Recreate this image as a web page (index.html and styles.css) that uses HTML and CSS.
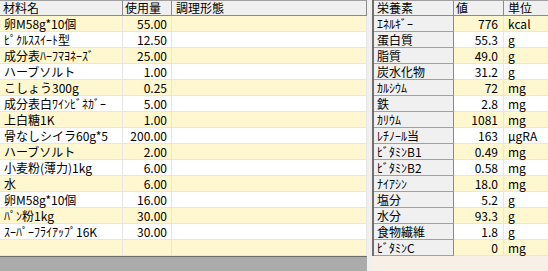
FILE: index.html
```html
<!DOCTYPE html>
<html lang="ja">
<head>
<meta charset="utf-8">
<link rel="stylesheet" href="styles.css">
</head>
<body>
<div class="screen">
  <div class="left">
    <div class="grid">
      <div class="row head">
        <div class="c c1">材料名</div>
        <div class="c c2">使用量</div>
        <div class="c c3">調理形態</div>
      </div>
      <div class="row y"><div class="c c1">卵M58g*10個</div><div class="c c2 num">55.00</div><div class="c c3"></div></div>
      <div class="row"><div class="c c1">ﾋﾟｸﾙｽｽｲｰﾄ型</div><div class="c c2 num">12.50</div><div class="c c3"></div></div>
      <div class="row y"><div class="c c1">成分表ﾊｰﾌﾏﾖﾈｰｽﾞ</div><div class="c c2 num">25.00</div><div class="c c3"></div></div>
      <div class="row"><div class="c c1">ハーブソルト</div><div class="c c2 num">1.00</div><div class="c c3"></div></div>
      <div class="row y"><div class="c c1">こしょう300g</div><div class="c c2 num">0.25</div><div class="c c3"></div></div>
      <div class="row"><div class="c c1">成分表白ﾜｲﾝﾋﾞﾈｶﾞｰ</div><div class="c c2 num">5.00</div><div class="c c3"></div></div>
      <div class="row y"><div class="c c1">上白糖1K</div><div class="c c2 num">1.00</div><div class="c c3"></div></div>
      <div class="row"><div class="c c1">骨なしシイラ60g*5</div><div class="c c2 num">200.00</div><div class="c c3"></div></div>
      <div class="row y"><div class="c c1">ハーブソルト</div><div class="c c2 num">2.00</div><div class="c c3"></div></div>
      <div class="row"><div class="c c1">小麦粉(薄力)1kg</div><div class="c c2 num">6.00</div><div class="c c3"></div></div>
      <div class="row y"><div class="c c1">水</div><div class="c c2 num">6.00</div><div class="c c3"></div></div>
      <div class="row"><div class="c c1">卵M58g*10個</div><div class="c c2 num">16.00</div><div class="c c3"></div></div>
      <div class="row y"><div class="c c1">ﾊﾟﾝ粉1kg</div><div class="c c2 num">30.00</div><div class="c c3"></div></div>
      <div class="row"><div class="c c1">ｽｰﾊﾟｰﾌﾗｲｱｯﾌﾟ16K</div><div class="c c2 num">30.00</div><div class="c c3"></div></div>
      <div class="row y"><div class="c c1"></div><div class="c c2 num"></div><div class="c c3"></div></div>
    </div>
  </div>
  <div class="split"></div>
  <div class="right">
    <div class="ngrid">
      <div class="nrow head">
        <div class="n n1">栄養素</div>
        <div class="n n2">値</div>
        <div class="n n3">単位</div>
      </div>
      <div class="nrow y"><div class="n n1">ｴﾈﾙｷﾞｰ</div><div class="n n2 num">776</div><div class="n n3">kcal</div></div>
      <div class="nrow"><div class="n n1">蛋白質</div><div class="n n2 num">55.3</div><div class="n n3">g</div></div>
      <div class="nrow y"><div class="n n1">脂質</div><div class="n n2 num">49.0</div><div class="n n3">g</div></div>
      <div class="nrow"><div class="n n1">炭水化物</div><div class="n n2 num">31.2</div><div class="n n3">g</div></div>
      <div class="nrow y"><div class="n n1">ｶﾙｼｳﾑ</div><div class="n n2 num">72</div><div class="n n3">mg</div></div>
      <div class="nrow"><div class="n n1">鉄</div><div class="n n2 num">2.8</div><div class="n n3">mg</div></div>
      <div class="nrow y"><div class="n n1">ｶﾘｳﾑ</div><div class="n n2 num">1081</div><div class="n n3">mg</div></div>
      <div class="nrow"><div class="n n1">ﾚﾁﾉｰﾙ当</div><div class="n n2 num">163</div><div class="n n3">μgRA</div></div>
      <div class="nrow y"><div class="n n1">ﾋﾞﾀﾐﾝB1</div><div class="n n2 num">0.49</div><div class="n n3">mg</div></div>
      <div class="nrow"><div class="n n1">ﾋﾞﾀﾐﾝB2</div><div class="n n2 num">0.58</div><div class="n n3">mg</div></div>
      <div class="nrow y"><div class="n n1">ﾅｲｱｼﾝ</div><div class="n n2 num">18.0</div><div class="n n3">mg</div></div>
      <div class="nrow"><div class="n n1">塩分</div><div class="n n2 num">5.2</div><div class="n n3">g</div></div>
      <div class="nrow y"><div class="n n1">水分</div><div class="n n2 num">93.3</div><div class="n n3">g</div></div>
      <div class="nrow"><div class="n n1">食物繊維</div><div class="n n2 num">1.8</div><div class="n n3">g</div></div>
      <div class="nrow y"><div class="n n1">ﾋﾞﾀﾐﾝC</div><div class="n n2 num">0</div><div class="n n3">mg</div></div>
    </div>
  </div>
</div>
</body>
</html>
```
FILE: styles.css
```css
html, body {
  margin: 0;
  padding: 0;
}
body {
  width: 548px;
  height: 271px;
  overflow: hidden;
  font-family: "Noto Sans CJK JP", "Noto Sans", sans-serif;
  font-size: 12px;
  color: #000;
}
.screen {
  display: flex;
  width: 548px;
  height: 271px;
}
.left {
  width: 367px;
  flex: none;
  background: #ababab;
  display: flex;
  flex-direction: column;
}
.grid {
  border-bottom: 1px solid #6d6d6d;
}
.row {
  display: grid;
  grid-template-columns: 123px 49px 195px;
  height: 16px;
  background: #fff;
}
.row.y {
  background: #fef7cf;
}
.c {
  box-sizing: border-box;
  height: 16px;
  line-height: 15px;
  border-right: 1px solid #e6e6e6;
  border-bottom: 1px solid #e6e6e6;
  white-space: nowrap;
  padding-left: 4px;
}
.c.num {
  text-align: right;
  padding-right: 4px;
  padding-left: 0;
}
.row.head {
  background: #f0f0f0;
}
.row.head .c {
  border-right-color: #8a8a8a;
  border-bottom-color: #8a8a8a;
  border-top: 1px solid #a0a0a0;
  line-height: 14px;
}
.row.head .c1 {
  padding-left: 3px;
}
.row.head .c2 {
  padding-left: 2px;
}
.split {
  width: 5px;
  flex: none;
  background: #f2f0ee;
}
.right {
  flex: 1;
  background: #f8efe7;
}
.ngrid {
  border-left: 2px solid #707070;
}
.nrow {
  display: grid;
  grid-template-columns: 80px 50px 60px;
  height: 16px;
  background: #fff;
}
.nrow.y {
  background: #fef7cf;
}
.n {
  box-sizing: border-box;
  height: 16px;
  line-height: 15px;
  border-right: 1px solid #e6e6e6;
  border-bottom: 1px solid #e6e6e6;
  white-space: nowrap;
  padding-left: 4px;
}
.n.num {
  text-align: right;
  padding-right: 5px;
  padding-left: 0;
}
.n.n1 {
  background: #f0f0f0;
  border-right-color: #8a8a8a;
  border-bottom-color: #a0a0a0;
  padding-left: 3px;
}
.nrow.head {
  background: #f0f0f0;
}
.nrow.head .n {
  border-right-color: #8a8a8a;
  border-bottom-color: #8a8a8a;
  border-top: 1px solid #a0a0a0;
  line-height: 14px;
}
.nrow.head .n2 {
  padding-left: 2px;
}
```
